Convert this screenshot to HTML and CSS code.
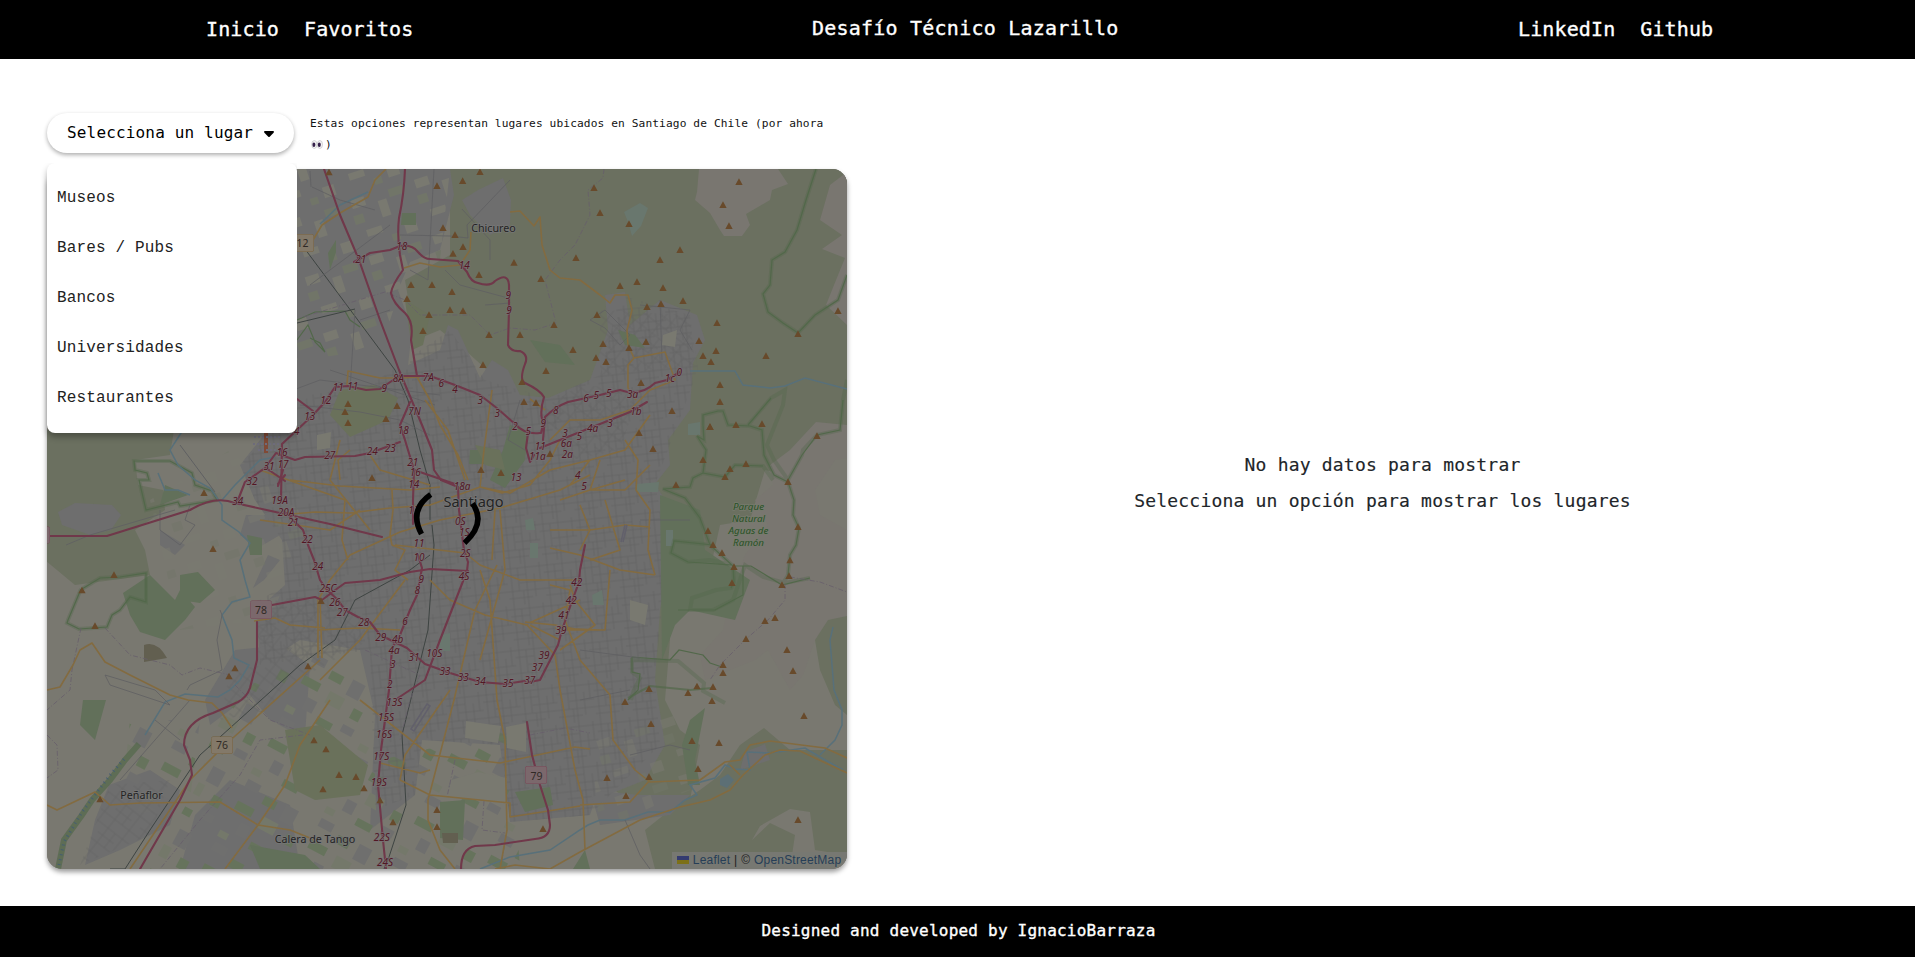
FILE: index.html
```html
<!DOCTYPE html>
<html lang="es">
<head>
<meta charset="utf-8">
<title>Desafío Técnico Lazarillo</title>
<link rel="stylesheet" href="styles.css">
</head>
<body>
<header class="header">
  <nav class="links links-left"><a>Inicio</a><a>Favoritos</a></nav>
  <h1 class="title">Desafío Técnico Lazarillo</h1>
  <nav class="links links-right"><a>LinkedIn</a><a>Github</a></nav>
</header>
<main class="main">
  <section class="places">
    <div class="toolbar">
      <div class="picker">
        <button class="picker-button">Selecciona un lugar<svg class="caret" viewBox="0 0 10 6"><path d="M0 .8Q0 0 1 0H9Q10 0 10 .8L9.600 1.700 5.700 5.700Q5 6.200 4.300 5.700L.4 1.700Z"/></svg></button>
        <ul class="menu"><li>Museos</li><li>Bares / Pubs</li><li>Bancos</li><li>Universidades</li><li>Restaurantes</li></ul>
      </div>
      <p class="note">Estas opciones representan lugares ubicados en Santiago de Chile (por ahora <span class="note-end"><svg class="eyes" viewBox="0 0 12 9"><g fill="#f5f5f5" stroke="#b9b9bd" stroke-width=".6"><ellipse cx="3.300" cy="4.500" rx="2.600" ry="4"/><ellipse cx="8.900" cy="4.500" rx="2.600" ry="4"/></g><g fill="#35204a"><ellipse cx="2.900" cy="4.800" rx="1.500" ry="2.200"/><ellipse cx="8.300" cy="4.800" rx="1.500" ry="2.200"/></g></svg>)</span></p>
    </div>
    <div class="map">
      <svg class="tiles" viewBox="47 169 800 700">
        <defs>
          <pattern id="streets" width="37" height="41" patternUnits="userSpaceOnUse" patternTransform="rotate(-6)"><path d="M0 4H37M0 11H19M12 19H37M0 27H37M0 34H24M4 0V41M11 4V27M19 0V41M27 11V34M33 0V19M15 27V41" fill="none" stroke="#5f5f61" stroke-width=".6"/></pattern>
          <pattern id="streets-diag" width="31" height="29" patternUnits="userSpaceOnUse" patternTransform="rotate(38)"><path d="M0 6H31M0 15H20M0 24H31M6 0V29M15 6V24M24 0V29" fill="none" stroke="#606062" stroke-width=".6"/></pattern>
          <pattern id="fields" width="83" height="71" patternUnits="userSpaceOnUse" patternTransform="rotate(28)"><path fill="#6f6f6e" d="M4 3h15v9H4zM50 8h14v17H50zM18 45h11v13H18zM62 52h13v8H62z"/><path fill="#66735c" d="M27 10h14v9H27zM5 27h19v9H5zM64 33h10v11H64zM36 57h17v8H36z"/><path fill="#74786a" d="M35 29h17v13H35zM3 61h10v7H3z"/></pattern>
          <pattern id="patches" width="67" height="59" patternUnits="userSpaceOnUse" patternTransform="rotate(-18)"><path fill="#797970" d="M3 4h14v9H3zM29 13h9v17h-9zM9 37h16v7H9zM47 42h12v11H47z"/><path fill="#717568" d="M42 5h15v8H42zM1 20h10v9H1zM32 49h8v7h-8z"/></pattern>
        </defs>
        <path fill="#797870" d="M47 169h800v700H47z"/>
        <path fill="#6b7060" d="M47 430H174L170 455 135 460 138 485 163 490 165 510 135 530 145 550 150 575 75 585 45 560ZM450 169H847V425L815 440 790 475 765 470 750 520 720 525 710 570 665 605 670 640 665 700 680 730 700 745 690 800 650 815 600 780 570 600 530 560 520 400 465 350 440 330 415 340 405 280 450 255Z"/>
        <path fill="#797670" d="M699 169 697 192 695 200 710 213 720 230 724 236 742 236 750 225 746 214 770 200 772 190 788 184 778 169ZM847 172 830 185 820 220 842 235 822 249 845 258 834 285 826 305 847 325ZM847 425 816 422 790 450 770 465 773 485 755 500 768 525 745 555 730 595 723 630 700 655 705 680 735 668 755 660 768 650 790 690 803 675 815 640 825 625 847 615V530L820 515 815 490 835 460 847 458Z"/>
        <path fill="#6b7060" d="M815 640 820 670 835 705 847 715V616L828 620ZM847 750H790L764 728 740 745 720 775 700 790 670 810 645 830 655 869H790L795 835 770 823 752 840 760 826 790 809 810 812 815 850 847 855Z"/>
        <path fill="#6e6e6e" d="M297 169H450L454 195 440 250 410 262 398 290 412 330 408 365 440 350 448 325 458 330 480 378 492 360 508 370 520 395 548 398 590 380 608 330 605 295 625 292 630 325 660 300 697 315 705 340 693 363 690 410 668 440 670 465 655 484 665 500 670 550 660 610 655 680 665 745 645 780 595 800 590 815 510 822 500 745 422 740 415 795 370 830 375 715 360 650 300 640 260 665 257 610 285 585 282 540 255 500 240 465 260 440 275 420 297 395Z"/>
        <path fill="#6e6e6e" d="M462 200 478 190 503 178 511 200 510 225 490 235 470 215ZM58 512 75 503 112 505 121 515 111 530 90 535 62 525ZM246 515 282 515 280 535 258 548 240 535ZM160 530 185 545 175 555 160 545ZM268 555 280 560 264 580 253 588ZM235 650 280 645 310 665 305 735 270 720 250 695 210 725 205 700ZM109 785 150 770 180 790 170 825 120 850 85 865 95 820ZM230 780 290 805 300 869H180L195 815ZM745 752 765 744 770 760 740 770ZM590 790 640 795 690 795 670 815 600 825Z"/>
        <path fill="url(#patches)" d="M297 169H450L440 260 400 290 380 350 297 360Z"/>
        <path fill="url(#patches)" opacity=".55" d="M150 500 230 450 310 520 270 620 180 630ZM590 740 680 700 690 790 600 830Z"/>
        <path fill="url(#fields)" d="M215 720 300 640 372 690 378 869H150L200 780ZM130 720 200 720 190 800 120 820ZM380 760 510 730 520 869H380Z"/>
        <path fill="url(#streets)" d="M310 395 370 385 450 330 485 380 548 398 600 375 620 295 690 315 698 370 668 450 655 484 668 550 655 680 660 745 590 815 510 822 500 745 422 740 415 795 375 810 370 650 260 665 260 600 285 585 282 540 255 500 240 465Z"/>
        <path fill="url(#streets-diag)" opacity=".8" d="M255 600H350L370 640 262 700ZM540 410 580 385 640 390 620 450 570 460ZM600 310 690 315 695 365 600 375ZM110 785 170 780 150 835 80 865ZM230 670 300 660 270 710 220 720Z"/>
        <!-- parks and woodland -->
        <g fill="#62705a"><path d="M402 213H416V225H401ZM328 253 336 240 336 252 330 270ZM165 485 188 495 160 505ZM180 575 198 572 215 590 200 603 180 600ZM123 593 150 575 175 600 180 590 195 607 185 620 165 640 140 632 130 615ZM83 700 106 700 95 740 80 725ZM247 535 262 538 262 555 250 555ZM470 450H484V464H469ZM510 425 528 432 525 460 505 488 490 480 503 450ZM530 340 560 345 575 365 545 362ZM618 330 635 335 645 348 625 345ZM660 495 700 510 705 550 750 580 735 620 690 610 675 625 662 660ZM690 720 705 708 695 760 700 785 688 785 682 745ZM250 845 305 855 320 869H260ZM440 802 465 800 463 840 440 838ZM515 792 550 787 553 805 525 812ZM585 850 590 869H573Z"/></g>
        <g fill="#6a715b"><path d="M340 390 375 385 398 398 388 420 350 437 330 415ZM405 300 430 315 423 345 412 350ZM475 445 500 450 505 470 485 465ZM285 730 320 725 368 765 360 795 315 800 295 790Z"/></g>
        <path fill="#797970" d="M466 721 501 726 498 743 465 738ZM506 727 526 723 526 752 507 748ZM478 772 507 778 506 802 448 797 451 780ZM317 435 331 432 330 448 317 450ZM663 335 677 330 675 347 662 345ZM630 600 648 605 645 625 630 620Z"/>
        <path fill="#625f50" d="M144 645Q157 640 167 658L144 662ZM442 833H458V843H443Z"/>
        <g fill="#69776e"><path d="M624 212 640 203 648 208 641 226 632 236 628 222ZM530 543H538V558H530ZM592 595 602 590 604 605H593ZM440 635 450 633V651H440ZM688 424 700 422V435H688ZM637 484 659 482 658 492H637ZM666 530H673V546H666ZM525 520 533 518 535 530H526Z"/></g>
        <path fill="#5c6f75" d="M720 779 728 774 734 780 727 788 720 785Z"/>

        <!-- reserves -->
        <g fill="none" stroke="#52684a" stroke-opacity=".35" stroke-width="4"><path d="M816 169 806 200 797 230 785 252 772 260 770 285 763 294 768 312 783 323 798 333 815 315 838 300 847 275M703 425V415L718 411 723 411 728 425 750 426 762 430 764 455 774 475 788 482M703 425 704 440 697 436 706 450 703 473 725 477 735 465 763 466 773 480M703 473 693 478 690 487 663 489 685 498 700 518 710 545 722 556 733 566 734 582 731 588 716 590 692 598 690 610 713 610 733 600 745 565 763 577 785 583 810 578M748 425 771 398 785 390 783 405 767 445 774 460 788 480 802 455 803 450 817 435 840 430 843 400 847 380M788 482 794 500 793 515 799 528 796 545 790 555 788 575 782 585M713 545 674 541 671 553 688 562 710 560 732 565M725 703 703 691 704 683 678 661 632 660 632 672 640 678 634 690 631 700"/><path d="M134 461H170L192 473 195 485 212 491 217 500 180 506 178 502 146 510 139 480 149 480 147 473 135 470ZM81 589 68 620 67 623 79 629 107 627 112 615 120 610 130 597 146 602V573L120 577 100 578 82 589"/></g>
        <g fill="none" stroke="#52684a" stroke-width="1.200"><path d="M816 169 806 200 797 230 785 252 772 260 770 285 763 294 768 312 783 323 798 333 815 315 838 300 847 275M703 425V415L718 411 723 411 728 425 750 426 762 430 764 455 774 475 788 482M703 425 704 440 697 436 706 450 703 473 725 477 735 465 763 466M703 473 693 478 690 487 663 489 685 498 700 518 710 545 733 566 734 582 731 588M748 425 771 398M788 480 802 455 817 435 840 430 843 400M788 482 794 500 793 515 799 528 796 545 790 555 788 575M713 545 674 541 671 553 688 562 732 565M733 566 751 566 782 585 810 578M743 566 743 595 715 610 678 610"/><path d="M134 461H170L192 473 195 485 212 491 217 500 180 506 178 502 146 510 139 480 149 480 147 473 135 470ZM81 589 68 620 67 623 79 629 107 627 112 615 120 610 130 597 146 602V573L120 577 100 578 82 589"/><path d="M632 657 670 660 679 650 703 655 710 663 722 667M632 657 632 672 640 674 638 690 628 700"/><path d="M297 320 315 312 345 311 350 320 360 327M297 340 308 325 315 342 325 352 320 343 310 338"/></g>
        <path fill="none" stroke="#52684a" stroke-opacity=".7" stroke-width="6" d="M58 869 64 840 82 815 92 800 110 780 125 760 139 744"/>
        <path fill="none" stroke="#52684a" stroke-opacity=".7" stroke-width="2" d="M628 698 650 686 690 690 712 688"/>
        <path fill="none" stroke="#465d72" stroke-width="3" stroke-dasharray="1 4" d="M59 865 64 842 82 812 110 775 125 758"/>
        <!-- water -->
        <g fill="none" stroke="#58707a" stroke-width="1.500"><path d="M183 430 170 450 178 465 195 480 210 488 222 505 222 520 239 532 250 543 240 560 245 580 250 597 232 602 222 615 232 640 234 658 249 665 240 680 230 690 218 697 185 694 165 702 145 735M222 500 235 485 260 460 275 457"/><path d="M690 371 735 371 743 385 770 388 785 386 805 378 847 389M320 224 340 205 368 192"/><path d="M480 869 510 857 550 850 580 830 588 825 600 820 625 820 648 812 670 812 685 800 697 795 690 785 715 778 725 765 735 769 750 770 747 752 770 753 805 748 820 757 843 770M833 627 830 640 834 690 842 710 842 725 835 740 820 755M158 473 165 490 178 490 190 495"/></g>
        <!-- railways -->
        <g fill="none" stroke="#3e4442" stroke-width="1"><path d="M305 249 395 370 408 400 420 450 430 485V520M432 525 434 545 428 630 402 735 406 805 388 860 384 869M297 323 355 309M430 555 410 570 355 600 335 640 300 665 200 755 150 830 125 869H110"/></g>
        <path fill="none" stroke="#5f6062" stroke-width="1" d="M180 445 215 492"/>
        <!-- secondary lanes -->
        <g fill="none" stroke="#5f6062" stroke-width=".8"><path d="M312 187 340 200 375 210M310 171 311 187M434 169 428 280 410 270M400 235 450 236 468 238 467 225 510 180M462 209 490 240 490 260M485 305 510 303 508 298 460 285 445 270M310 285 390 225M350 390 355 310M330 370 435 405M280 395 320 380 440 395M360 320 390 310M590 320 605 310 630 335 620 345 605 328ZM640 305 690 310 680 330 692 350M660 300 662 360M300 405 360 412 400 420 430 435M520 400 508 440 525 450M66 545 90 535 175 510M190 505 185 520 195 525 180 545 160 530M160 510 160 530M217 640 222 670 190 685 187 690M220 610 222 615 217 640M105 675 155 690 170 705 110 685ZM190 700 120 780M180 740 155 720M640 520 690 520M630 755 670 745 690 750M625 820 640 855 650 869M580 650 640 658M580 700 630 690"/><path stroke-dasharray="5 2 1 2" stroke="#675e6b" d="M604 169 603 178 588 190 590 215 575 245M575 245 560 260 545 280 556 323 535 330 510 328 490 335 470 315 420 315 405 300 385 292M385 292 300 318M785 584 785 600 768 620 745 640 720 665 710 680M81 628 72 670 70 690 47 710M105 628 130 655 170 665 182 675 200 668 230 675M790 577 820 582 847 592M47 735 57 745 58 770 47 778M365 650 420 675 410 700 400 740M455 760 447 797M484 801 482 830 505 833M502 860 507 830M235 685 270 720 310 735M303 735 260 740 240 775 200 820 160 869M530 735 565 728 590 733"/></g>
        <!-- main roads -->
        <g fill="none" stroke="#836b40" stroke-width="1.600" stroke-linejoin="round"><path d="M386 169 375 180 368 197 340 213 322 225 310 245M404 268 420 263 440 267 460 265 470 250 471 232M510 212 520 211 534 226 540 217 542 245 550 270 560 278 580 280 600 295 610 303 615 295 628 295 632 310 627 330 628 345 634 358 628 365 628 388 636 400M634 358 665 352 675 380 650 390 630 410 600 420 570 420 550 440M347 385 348 371 380 378 400 378 420 377M417 377 430 400 440 425 458 455 468 480M425 400 448 430 465 480M492 390 488 420 484 450 480 487M530 399 545 410M290 480 340 486 375 488 410 490 440 487M280 515 315 512 350 513 390 508 430 505 480 487 510 493 550 470 590 460 625 450 650 415M480 487 502 493 530 485 550 460 560 440M260 470 345 500 342 540 348 560M370 455 380 470 430 485M340 440 330 480 370 530M318 600 330 580 350 555 400 532 440 520 500 508 560 490 590 475M392 490 393 510 390 535 392 545 405 550 395 570 408 580M395 545 465 553 480 565 520 580 580 580M405 580 375 620 360 640 320 680M430 580 450 600 485 615 527 625 555 655 560 690 575 770 583 800 585 850M495 510 492 560M480 570 490 600 497 700 505 740 507 830 500 869M497 565 475 610 454 700 428 800 428 820 440 850 455 869M500 510 505 570 480 660M450 690 405 755 400 780M260 520 330 530 360 510M318 600V658M320 600 322 658M318 630 360 628 400 630M560 500 590 490 625 480M570 485 590 460M550 530 590 530 625 525 650 527M580 505 590 530 580 550M600 460 590 490 625 490 650 465M625 440 638 460 636 490 650 510 648 550 655 575M550 548 580 555 620 570 655 575M590 560 620 550 605 500M610 570 605 630 560 630M550 585 570 590 565 620 580 660 610 695 613 740 635 770 650 782 700 780 725 762 740 760 750 745 770 741 825 748 847 758M580 805 630 802 650 780M525 622 555 625 580 630M560 650 595 625 575 600 570 585M525 625 580 600M530 625 560 640M600 630 555 628M320 660 225 745 190 780 130 869M254 621 275 618 290 625 325 628M330 700 300 745 285 785 258 825 225 869M380 763 420 773 430 770M360 700 430 755 500 763 575 747 590 749M400 780 430 795 510 803 510 817 580 806"/><path d="M47 690 60 687 73 665 80 650 92 643 105 662 130 675 170 695 188 700 212 703 222 713 232 728M47 805 57 810 95 792 110 805 140 803 220 802 258 825 290 830 315 840M495 869 515 865 550 869 580 852 640 820 680 807 710 800 730 790 743 775 765 755 780 750 800 751 847 773M730 765 740 775M340 480 338 460 350 450"/></g>
        <!-- motorways -->
        <g fill="none" stroke="#70384a" stroke-width="2.100" stroke-linejoin="round" stroke-linecap="round"><path d="M324 169 340 215 359 260 380 320 399 370 422 425 432 450 434 470 441 480"/><path d="M405 169Q404 195 399 218 397 235 400 255L403 270Q392 285 391 293 393 303 405 313 414 322 411 340L417 376M354 262 370 253 390 250 400 246Q412 244 418 252 424 259 430 259L458 261 467 272Q471 282 478 283 490 287 495 281 508 272 509 285V310L508 345Q511 352 520 351 529 355 525 364 519 380 525 383 540 390 544 397 540 410 542 419"/><path d="M399 376 430 376 455 385 480 395 498 409 515 424Q525 435 540 433M541 433 545 417Q555 407 568 402L600 395 620 390Q640 397 655 383L667 380 680 372M540 448 600 424 630 412 647 402M541 433 545 417 543 440M528 433 526 448 530 462 534 455"/><path d="M410 402 400 425 405 440 414 470 455 484M414 470 413 500 413 524 M399 376 380 389 366 390 348 386 335 387 325 402 313 415 297 430 282 444 281 500 M297 399 313 411"/><path d="M441 480 458 487 459 510 464 550 468 562 467 571 440 640 425 680 398 698M47 536 107 536 190 510Q215 495 235 503L280 513 330 524 382 537M283 510 291 518 303 530 308 545 314 560 320 580 327 590 338 600 345 610 358 617 370 622 380 635 407 648 425 664 450 673 480 682 505 684 525 681"/><path d="M272 605 315 597 322 600 338 588 345 583 380 580 410 572 430 569 468 571M257 622V660L250 688Q247 697 238 702L213 713Q184 722 184 745L190 760 192 775 180 800 140 869"/><path d="M418 555 422 568 417 595 410 610 400 635 392 648 389 690 381 750 378 785 383 840 386 869M585 545 580 570 579 582 571 604 562 630 558 645 544 672 540 680 525 683M527 722 532 755 540 785 548 810 550 825Q550 838 535 839L495 845 475 846Q461 849 461 869"/><path d="M238 500 245 482 265 468 276 453 295 460 305 457 355 456 370 453 400 442M266 468 285 481M278 484 285 475M283 470 278 486"/></g>
        <path fill="none" stroke="#804a36" stroke-width="4" d="M266 430V453"/>
        <path fill="none" stroke="#6e6c7b" stroke-width="2" stroke-dasharray="2 2" d="M255 430H280M254 437H282M253 444H280M258 450H278"/>
        <g fill="none" stroke="#62606b" stroke-width="1.500"><path d="M411 729 427 704 430 706 414 731ZM625 525 621 542M627 525 623 542"/></g>

        <g fill="#684a2b">
          <path transform="translate(290 160) scale(.3333)" d="M117 26l11 20h-22zM441 67l11 20h-22zM518 52l11 20h-22zM570 25l11 20h-22zM459 193l11 20h-22zM495 214l11 20h-22zM519 250l11 20h-22zM489 270l11 20h-22zM567 334l11 20h-22zM672 297l11 20h-22zM858 283l11 20h-22zM753 346l11 20h-22zM363 364l11 20h-22zM426 364l11 20h-22zM486 385l11 20h-22zM351 406l11 20h-22zM417 454l11 20h-22zM480 439l11 20h-22zM519 442l11 20h-22zM399 502l11 20h-22zM597 514l11 20h-22zM690 514l11 20h-22zM792 484l11 20h-22zM849 559l11 20h-22zM579 604l11 20h-22zM768 622l11 20h-22zM696 655l11 20h-22zM702 715l11 20h-22zM738 718l11 20h-22zM174 721l11 20h-22zM165 745l11 20h-22zM174 778l11 20h-22zM288 766l11 20h-22zM321 727l11 20h-22z"/>
          <path transform="translate(570 160) scale(.3333)" d="M507 55l11 20h-22zM459 124l11 20h-22zM477 187l11 20h-22zM72 73l11 20h-22zM90 148l11 20h-22zM177 181l11 20h-22zM330 259l11 20h-22zM270 289l11 20h-22zM150 367l11 20h-22zM201 355l11 20h-22zM279 373l11 20h-22zM231 430l11 20h-22zM273 421l11 20h-22zM339 412l11 20h-22zM81 454l11 20h-22zM441 478l11 20h-22zM99 541l11 20h-22zM177 553l11 20h-22zM228 535l11 20h-22zM78 583l11 20h-22zM108 595l11 20h-22zM387 532l11 20h-22zM438 562l11 20h-22zM399 577l11 20h-22zM423 595l11 20h-22zM588 577l11 20h-22zM684 511l11 20h-22zM804 442l11 20h-22zM213 658l11 20h-22zM450 664l11 20h-22zM450 715l11 20h-22zM306 742l11 20h-22zM420 790l11 20h-22zM498 784l11 20h-22zM576 781l11 20h-22z"/>
          <path transform="translate(550 400) scale(.3333)" d="M309 136l11 20h-22zM267 88l11 20h-22zM480 70l11 20h-22zM801 97l11 20h-22zM459 169l11 20h-22zM378 244l11 20h-22zM525 220l11 20h-22zM540 196l11 20h-22zM588 181l11 20h-22zM714 235l11 20h-22zM474 382l11 20h-22zM489 424l11 20h-22zM516 448l11 20h-22zM552 490l11 20h-22zM546 538l11 20h-22zM744 370l11 20h-22zM720 470l11 20h-22zM717 517l11 20h-22zM696 544l11 20h-22zM645 652l11 20h-22zM675 643l11 20h-22zM588 706l11 20h-22z"/>
          <path transform="translate(240 400) scale(.3333)" d="M396 223l11 20h-22zM723 199l11 20h-22zM783 208l11 20h-22zM930 151l11 20h-22zM243 592l11 20h-22z"/>
          <path transform="translate(30 430) scale(.3333)" d="M522 178l11 20h-22zM549 346l11 20h-22zM252 424l11 20h-22zM156 470l11 20h-22zM195 577l11 20h-22zM615 704l11 20h-22zM597 728l11 20h-22zM834 698l11 20h-22zM210 1097l11 20h-22zM852 920l11 20h-22zM888 947l11 20h-22zM879 1067l11 20h-22z"/>
          <path transform="translate(320 620) scale(.3333)" d="M57 454l11 20H46zM108 460l11 20H97zM132 494l11 20h-22zM180 530l11 20h-22zM219 596l11 20h-22zM351 559l11 20h-22zM351 610l11 20h-22zM669 616l11 20h-22z"/>
          <path transform="translate(580 620) scale(.3333)" d="M621 79l11 20h-22zM639 142l11 20h-22zM429 124l11 20h-22zM429 148l11 20h-22zM399 190l11 20h-22zM351 188l11 20h-22zM324 208l11 20h-22zM396 232l11 20h-22zM207 196l11 20h-22zM135 235l11 20h-22zM213 301l11 20h-22zM672 277l11 20h-22zM336 352l11 20h-22zM417 358l11 20h-22zM354 436l11 20h-22zM81 463l11 20H70zM207 460l11 20h-22zM138 517l11 20h-22zM654 589l11 20h-22z"/>
        </g>

        <g class="refs">
          <g transform="translate(290 160) scale(.3333)"><text x="335" y="270">18</text><text x="212" y="308">21</text><text x="523" y="326">14</text><text x="655" y="416">9</text><text x="657" y="461">9</text><text x="325" y="665">8A</text><text x="415" y="664">7A</text><text x="454" y="681">6</text><text x="495" y="698">4</text><text x="571" y="732">3</text><text x="622" y="772">3</text><text x="797" y="762">8</text><text x="145" y="692">11</text><text x="188" y="689">11</text><text x="283" y="697">9</text><text x="107" y="731">12</text><text x="59" y="781">13</text><text x="374" y="764">7N</text></g>
          <g transform="translate(570 160) scale(.3333)"><text x="48" y="726">6</text><text x="79" y="717">5</text><text x="116" y="712">5</text><text x="188" y="714">3a</text><text x="299" y="665">1c</text><text x="328" y="647">0</text><text x="198" y="765">1b</text><text x="120" y="800">3</text><text x="68" y="817">4a</text></g>
          <g transform="translate(240 400) scale(.3333)"><text x="490" y="103">18</text><text x="170" y="106">4</text><text x="126" y="168">16</text><text x="129" y="205">17</text><text x="87" y="211">31</text><text x="269" y="176">27</text><text x="397" y="165">24</text><text x="451" y="155">23</text><text x="518" y="197">21</text><text x="526" y="227">16</text><text x="521" y="264">14</text><text x="36" y="256">32</text><text x="-7" y="314">34</text><text x="119" y="311">19A</text><text x="138" y="348">20A</text><text x="160" y="379">21</text><text x="202" y="428">22</text><text x="233" y="510">24</text><text x="264" y="577">25C</text><text x="284" y="618">26</text><text x="307" y="648">27</text><text x="371" y="677">28</text><text x="495" y="675">6</text><text x="532" y="582">8</text><text x="544" y="549">9</text><text x="537" y="482">10</text><text x="537" y="440">11</text><text x="521" y="341">13</text><text x="666" y="271">18a</text><text x="661" y="376">0S</text><text x="673" y="408">1S</text><text x="676" y="471">2S</text><text x="672" y="541">4S</text><text x="828" y="243">13</text><text x="892" y="180">11a</text><text x="901" y="151">11</text><text x="910" y="81">9</text><text x="865" y="106">5</text><text x="825" y="89">2</text></g>
          <g transform="translate(550 400) scale(.3333)"><text x="45" y="110">3</text><text x="88" y="120">5</text><text x="49" y="140">6a</text><text x="52" y="173">2a</text><text x="83" y="238">4</text><text x="102" y="270">5</text><text x="80" y="557">42</text><text x="64" y="611">42</text><text x="42" y="656">41</text><text x="33" y="702">39</text></g>
          <g transform="translate(320 620) scale(.3333)"><text x="182" y="62">29</text><text x="233" y="70">4b</text><text x="222" y="101">4a</text><text x="282" y="122">31</text><text x="343" y="110">10S</text><text x="218" y="143">3</text><text x="209" y="204">2</text><text x="375" y="166">33</text><text x="430" y="183">33</text><text x="481" y="195">34</text><text x="564" y="202">35</text><text x="629" y="192">37</text><text x="652" y="153">37</text><text x="672" y="118">39</text><text x="723" y="42">39</text><text x="223" y="258">13S</text><text x="198" y="303">15S</text><text x="192" y="354">16S</text><text x="184" y="419">17S</text><text x="176" y="498">19S</text><text x="185" y="662">22S</text><text x="195" y="739">24S</text></g>
        </g>
        <g class="shield"><rect x="286" y="234.500" width="27.500" height="17" rx="1.500" fill="#837969" stroke="#75603f"/><text x="302.500" y="247">12</text><rect x="250.500" y="601" width="21" height="17.500" rx="1.500" fill="#7b686c" stroke="#774756"/><text x="261" y="614">78</text><rect x="211.500" y="737" width="21" height="16.500" rx="1.500" fill="#837969" stroke="#75603f"/><text x="222" y="749">76</text><rect x="525.500" y="766.500" width="21" height="17" rx="1.500" fill="#7b686c" stroke="#774756"/><text x="536.500" y="779.500">79</text><rect x="40" y="527" width="9.500" height="16" rx="1.500" fill="#7b686c" stroke="#774756"/></g>
        <g class="towns"><text x="493.500" y="231.500">Chicureo</text><text x="141.500" y="798.500">Peñaflor</text><text x="315" y="843">Calera de Tango</text><text class="city" x="473.500" y="506.500">Santiago</text></g>
        <g class="park"><text x="748.500" y="510">Parque</text><text x="748.500" y="522">Natural</text><text x="748.500" y="534">Aguas de</text><text x="748.500" y="546">Ramón</text></g>
        <path class="spinner" d="M430.700 494.500Q408.500 510 421.500 534M472.500 503.500Q486.500 523 464.500 543"/>
      </svg>
      <div class="credit"><svg class="flag" viewBox="0 0 12 8"><path fill="#343b70" d="M0 0h12v4H0z"/><path fill="#7c7018" d="M0 4h12v4H0z"/></svg><a>Leaflet</a><span>|</span><span>©</span><a>OpenStreetMap</a></div>
    </div>
  </section>
  <section class="empty"><p>No hay datos para mostrar</p><p>Selecciona un opción para mostrar los lugares</p></section>
</main>
<footer class="footer">Designed and developed by IgnacioBarraza</footer>
</body>
</html>
```
FILE: styles.css
```css
* { box-sizing: border-box; }

body {
  margin: 0;
  height: 957px;
  display: flex;
  flex-direction: column;
  overflow: hidden;
  background: #fff;
  color: #212529;
  font: 16px "DejaVu Sans Mono", "Liberation Mono", monospace;
  letter-spacing: .01em;
}

.header {
  height: 59px;
  display: grid;
  grid-template-columns: 606px 1fr 602px;
  align-items: center;
  background: #000;
  color: #fff;
  font-size: 20px;
}

.links { display: flex; gap: 25px; padding-bottom: 1px; letter-spacing: .12px; }
.links-left { padding-left: 206px; }
.links-right { padding-left: 205px; }
.title { margin: 0; font-size: 20px; font-weight: 400; padding: 0 0 3px 206px; letter-spacing: .22px; white-space: nowrap; }
.links, .title, .footer { -webkit-text-stroke: .35px #fff; }

.main { flex: 1; display: flex; padding-left: 47px; }
.places { width: 800px; padding-top: 54px; }
.toolbar { display: flex; height: 56px; gap: 16px; }
.picker { position: relative; width: 247px; }

.picker-button {
  width: 247px;
  height: 40px;
  padding: 0 20px 2px;
  display: flex;
  align-items: center;
  justify-content: space-between;
  border: 0;
  border-radius: 20px;
  background: #fff;
  color: #000;
  font: inherit;
  letter-spacing: .16px;
  white-space: nowrap;
  box-shadow: 0 2px 4px rgba(0, 0, 0, .32);
}
.caret { width: 10px; height: 6px; flex: none; margin-top: 4px; }

.menu {
  position: absolute;
  z-index: 2;
  top: 50px;
  left: 0;
  width: 250px;
  height: 270px;
  margin: 0;
  padding: 10px;
  list-style: none;
  border-radius: 8px;
  background: #fff;
  color: #222;
  font-family: "Liberation Mono", monospace;
  letter-spacing: .15px;
  box-shadow: 0 4px 6px rgba(0, 0, 0, .3);
  clip-path: inset(0 0 -12px -12px);
}
.menu li { height: 50px; line-height: 51px; }

.note {
  flex: 1;
  margin: 0;
  padding: 1px 12px 0 0;
  font-size: 11.2px;
  line-height: 20.5px;
  letter-spacing: .11px;
  color: #111;
}
.note-end { white-space: nowrap; }
.eyes { width: 12px; height: 9px; margin: 0 2px -1px 1px; }

.map {
  position: relative;
  height: 700px;
  border-radius: 15px;
  background: #797870;
  box-shadow: 0 3px 5px rgba(0, 0, 0, .4);
}
.tiles { display: block; width: 800px; height: 700px; border-radius: 15px; letter-spacing: 0; }
.refs, .shield, .towns, .park { font-family: "Noto Sans", sans-serif; paint-order: stroke; text-anchor: middle; }
.refs { font-size: 30px; font-style: italic; fill: #521724; stroke: #777174; stroke-width: 4px; }
.shield { font-size: 10.500px; }
.shield text { fill: #302a25; }
.towns { font-size: 10.700px; fill: #242424; stroke: #777; stroke-width: 1.500px; }
.towns .city { font-size: 14.600px; }
.park { font-size: 9.800px; font-style: italic; fill: #285126; stroke: #777b6d; stroke-width: 1.500px; }
.spinner { fill: none; stroke: #000; stroke-width: 5.500px; }

.credit {
  position: absolute;
  right: 0;
  bottom: 0;
  width: 175px;
  height: 17px;
  display: flex;
  align-items: center;
  gap: 3.800px;
  padding: 0 0 2px 5px;
  border-bottom-right-radius: 15px;
  background: #777872;
  color: #222;
  font: 12px "Liberation Sans", Arial, sans-serif;
  letter-spacing: .2px;
  white-space: nowrap;
}
.credit a { color: #263e57; }
.flag { width: 12px; height: 8px; margin-right: 0; flex: none; }

.empty {
  flex: 1;
  padding-top: 388px;
  padding-left: 3px;
  text-align: center;
  font-size: 18px;
  letter-spacing: .2px;
  -webkit-text-stroke: .15px #212529;
}
.empty p { margin: 0; line-height: 36px; }

.footer {
  height: 51px;
  line-height: 49px;
  padding-left: 2px;
  background: #000;
  color: #fff;
  text-align: center;
  letter-spacing: .22px;
}
```
